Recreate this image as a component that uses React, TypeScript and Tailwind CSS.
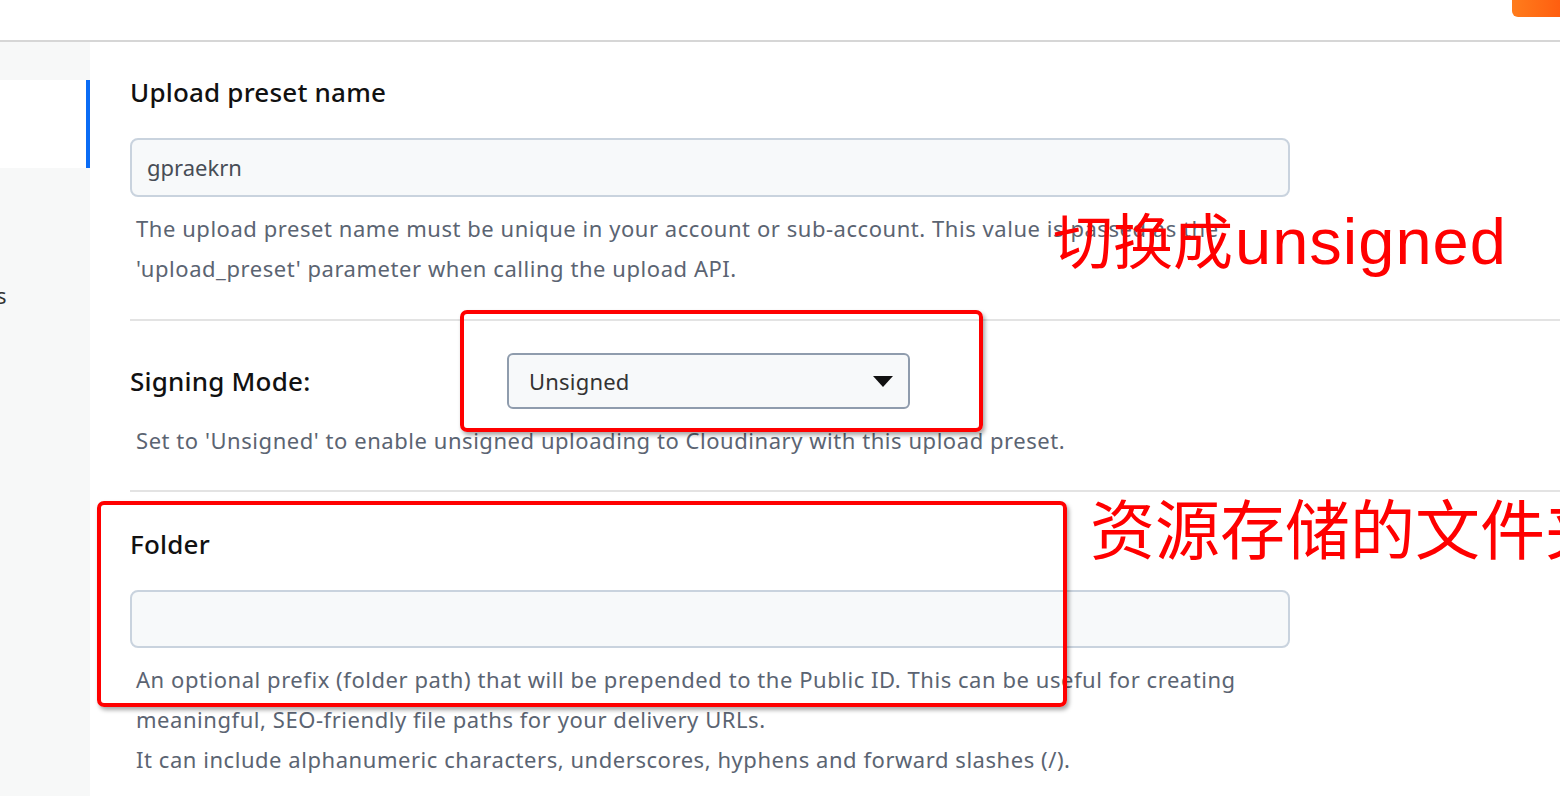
import React from "react";

const body = { fontFamily: '"Noto Sans", "Open Sans", sans-serif' } as React.CSSProperties;
const cjk = { fontFamily: '"Liberation Sans", "Noto Sans CJK SC", sans-serif' } as React.CSSProperties;

function Help({ children }: { children: React.ReactNode }) {
  return <div className="pl-[6px] text-[22px] leading-[40px] tracking-[0.55px] text-[#5b6472]">{children}</div>;
}

export default function App() {
  return (
    <div className="relative h-[796px] w-[1560px] overflow-hidden bg-white" style={body}>
      <div className="relative h-[42px] border-b-2 border-[#d6d6d6] bg-white">
        <div className="absolute right-0 top-0 h-[17px] w-[48px] rounded-bl-[6px] bg-gradient-to-r from-[#ff7c1c] to-[#ff5e0f]" />
      </div>
      <div className="flex">
        <div className="flex w-[90px] flex-col bg-[#f7f8f8]">
          <div className="h-[38px]" />
          <div className="h-[88px] border-r-4 border-[#0a6cf5] bg-white" />
          <div className="relative h-[130px]">
            <span className="absolute left-[-4px] top-[112px] text-[22px] leading-[30px] text-[#333]">s</span>
          </div>
          <div className="h-[600px]" />
        </div>
        <div className="flex-1 pl-[40px]">
          {/* section 1 */}
          <div className="border-b-2 border-[#e3e3e3] pb-[31px]">
            <div className="pt-[34px] text-[26px] font-medium leading-[32px] tracking-[0.2px] text-[#111]">Upload preset name</div>
            <div className="mt-[30px] flex h-[59px] w-[1160px] items-center rounded-[8px] border-2 border-[#c9d3de] bg-[#f7f9fa] pl-[15px] text-[22px] text-[#474d56]">
              gpraekrn
            </div>
            <div className="mt-[11px]">
              <Help>
                The upload preset name must be unique in your account or sub-account. This value is passed as the
                <br />
                'upload_preset' parameter when calling the upload API.
              </Help>
            </div>
          </div>
          {/* section 2 */}
          <div className="border-b-2 border-[#e3e3e3] pb-[30px]">
            <div className="mt-[32px] flex items-center">
              <div className="w-[377px] text-[26px] font-medium leading-[32px] tracking-[0.2px] text-[#111]">Signing Mode:</div>
              <div className="flex h-[56px] w-[403px] items-center justify-between rounded-[6px] border-2 border-[#8f9cad] bg-[#f7f9fa] pl-[20px] pr-[15px] text-[22px] tracking-[0.2px] text-[#333]">
                <span>Unsigned</span>
                <svg width="20" height="11" viewBox="0 0 20 11">
                  <path d="M0 0 L20 0 L10 11 Z" fill="#111" />
                </svg>
              </div>
            </div>
            <div className="mt-[11px]">
              <Help>Set to 'Unsigned' to enable unsigned uploading to Cloudinary with this upload preset.</Help>
            </div>
          </div>
          {/* section 3 */}
          <div>
            <div className="pt-[36px] text-[26px] font-medium leading-[32px] tracking-[0.2px] text-[#111]">Folder</div>
            <div className="mt-[30px] h-[58px] w-[1160px] rounded-[8px] border-2 border-[#c9d3de] bg-[#f7f9fa]" />
            <div className="mt-[11px]">
              <Help>
                An optional prefix (folder path) that will be prepended to the Public ID. This can be useful for creating
                <br />
                meaningful, SEO-friendly file paths for your delivery URLs.
                <br />
                It can include alphanumeric characters, underscores, hyphens and forward slashes (/).
              </Help>
            </div>
          </div>
        </div>
      </div>

      {/* annotations */}
      <div className="absolute left-[460px] top-[310px] h-[122px] w-[523px] rounded-[7px] border-4 border-[#ff0000] shadow-[2px_3px_4px_rgba(0,0,0,0.35)]" />
      <div className="absolute left-[97px] top-[501px] h-[206px] w-[970px] rounded-[7px] border-4 border-[#ff0000] shadow-[2px_3px_4px_rgba(0,0,0,0.35)]" />
      <div className="absolute left-[1053px] top-[206px] flex items-baseline whitespace-nowrap text-[60px] leading-[72px] text-[#ff0000]" style={cjk}>
        <span>切换成</span>
        <span className="ml-[2px] text-[65px] tracking-[1px]">unsigned</span>
      </div>
      <div className="absolute left-[1090px] top-[494px] whitespace-nowrap text-[65px] leading-[76px] text-[#ff0000]" style={cjk}>
        资源存储的文件夹
      </div>
    </div>
  );
}
